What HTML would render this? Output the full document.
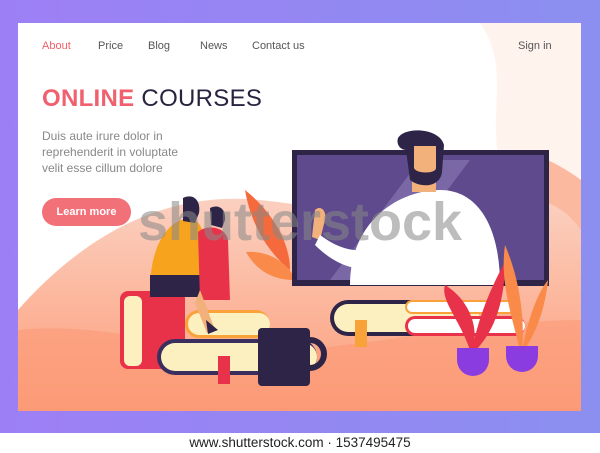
<!DOCTYPE html>
<html><head><style>
body{margin:0;width:600px;height:453px;overflow:hidden;font-family:"Liberation Sans",sans-serif;background:#fff;position:relative}
.bg{position:absolute;left:0;top:0;width:600px;height:433px;background:linear-gradient(90deg,#9d7ff5,#8b8ff0)}
.foot{position:absolute;left:0;top:433px;width:600px;height:20px;background:#fff;text-align:center;font-size:13.5px;color:#222;line-height:20px}
.nav{position:absolute;top:40px;font-size:11px;color:#555}
</style></head><body>
<div class="bg"></div>
<svg style="position:absolute;left:0;top:0" width="600" height="433">
<defs>
<linearGradient id="g2" x1="0" y1="0" x2="0" y2="1"><stop offset="0" stop-color="#fbd0c0"/><stop offset="1" stop-color="#fc9c78"/></linearGradient>
</defs>
<rect x="18" y="23" width="563" height="388" fill="#fff"/>
<path d="M480 23 C520 80 470 140 520 200 C560 240 581 230 581 230 V23Z" fill="#fff3ee"/>
<path d="M581 180 C540 150 500 140 480 170 V411 H581Z" fill="#fbb9a0"/>
<path d="M18 411 V310 C80 240 160 190 260 200 C360 210 420 240 480 210 C530 190 560 200 581 230 V411Z" fill="url(#g2)"/>
<path d="M18 411 V330 C120 320 200 360 300 350 C400 340 500 320 581 320 V411Z" fill="#fc9a76" opacity=".6"/>
<path d="M245 190 C270 210 290 240 290 270 C265 250 250 220 245 190Z" fill="#f56a3c"/>
<path d="M246 252 C270 250 290 265 295 280 C270 280 255 268 246 252Z" fill="#f98a4a"/>
<rect x="292" y="150" width="257" height="136" fill="#2e2447"/>
<rect x="297" y="155" width="247" height="125" fill="#5e4a8c"/>
<path d="M330 280 L420 160 L470 160 L380 280Z" fill="#8e7cb8" opacity=".6"/>
<path d="M350 285 C350 220 400 190 440 190 C480 190 500 230 500 285Z" fill="#fff"/>
<path d="M412 150 h24 v42 h-24z" fill="#f2b07a"/>
<path d="M398 138 C405 126 440 128 444 145 L442 172 C440 188 420 188 410 180 L406 150 C400 150 396 144 398 138Z" fill="#2e2447"/>
<path d="M414 146 h22 v22 c0 6 -20 6 -22 0z" fill="#f2b07a"/>
<path d="M315 210 c5 -5 12 0 10 10 l-5 20 l-8 -3z" fill="#f2b07a"/>
<path d="M320 235 C340 250 360 255 380 245 L385 265 C360 275 335 265 315 245Z" fill="#fff"/>
<rect x="330" y="300" width="150" height="36" rx="18" fill="#2e2447"/>
<rect x="334" y="304" width="146" height="28" rx="14" fill="#fdf0c0"/>
<rect x="405" y="300" width="110" height="14" rx="7" fill="#f9a23a"/>
<rect x="407" y="302" width="108" height="10" rx="5" fill="#fff"/>
<rect x="405" y="316" width="120" height="20" rx="10" fill="#e8324a"/>
<rect x="408" y="319" width="117" height="14" rx="7" fill="#fff"/>
<rect x="355" y="320" width="12" height="27" fill="#f9a23a"/>
<rect x="120" y="291" width="65" height="78" rx="8" fill="#e8324a"/>
<rect x="124" y="296" width="18" height="70" rx="6" fill="#fdf0c0"/>
<rect x="185" y="310" width="85" height="28" rx="14" fill="#f9a23a"/>
<rect x="188" y="313" width="82" height="22" rx="11" fill="#fdf0c0"/>
<rect x="157" y="339" width="160" height="36" rx="18" fill="#3a2e5e"/>
<rect x="161" y="343" width="156" height="28" rx="14" fill="#fdf0c0"/>
<rect x="218" y="356" width="12" height="28" fill="#e8324a"/>
<path d="M150 290 C150 250 165 220 190 218 C205 220 210 250 205 290Z" fill="#f7a31e"/>
<path d="M150 275 h60 v22 h-60z" fill="#2e2447"/>
<path d="M198 232 C205 225 225 225 228 240 L230 300 L200 300Z" fill="#e8324a"/>
<path d="M183 198 c10 -5 18 2 16 15 l-4 10 l-12 -2z" fill="#2e2447"/>
<path d="M210 208 c8 -4 16 0 15 12 l-3 8 l-11 -3z" fill="#2e2447"/>
<path d="M200 290 l15 40 l-8 3 l-12 -30z" fill="#f2b07a"/>
<path d="M206 320 l12 10 l-10 4z" fill="#2e2447"/>
<rect x="258" y="328" width="52" height="58" rx="4" fill="#2e2447"/>
<path d="M310 340 a14 14 0 0 1 0 28" stroke="#2e2447" stroke-width="6" fill="none"/>
<path d="M470 350 C460 320 440 300 445 285 C470 300 480 330 472 350Z" fill="#e8324a"/>
<path d="M472 350 C480 310 495 280 505 262 C505 300 495 330 476 350Z" fill="#e8324a"/>
<path d="M520 350 C510 310 500 280 505 245 C520 280 525 320 522 350Z" fill="#f98a4a"/>
<path d="M522 350 C530 310 540 290 548 280 C545 310 535 335 524 350Z" fill="#f98a4a"/>
<path d="M457 348 h32 v12 a16 16 0 0 1 -32 0z" fill="#8a3ce0"/>
<path d="M506 346 h32 v10 a16 16 0 0 1 -32 0z" fill="#8a3ce0"/>
<text x="300" y="240" text-anchor="middle" font-family="Liberation Sans" font-weight="bold" font-size="54" fill="#888" opacity=".55">shutterstock</text>
</svg>
<div class="nav" style="left:42px;color:#f0606a">About</div>
<div class="nav" style="left:98px">Price</div>
<div class="nav" style="left:148px">Blog</div>
<div class="nav" style="left:200px">News</div>
<div class="nav" style="left:252px">Contact us</div>
<div class="nav" style="left:518px">Sign in</div>
<div style="position:absolute;left:42px;top:85px;font-size:24px;color:#2a2340;letter-spacing:.3px"><b style="color:#f0606e">ONLINE</b> COURSES</div>
<div style="position:absolute;left:42px;top:128px;font-size:12px;line-height:16px;color:#888">Duis aute irure dolor in<br>reprehenderit in voluptate<br>velit esse cillum dolore</div>
<div style="position:absolute;left:42px;top:198px;width:89px;height:28px;border-radius:14px;background:#f27078;color:#fff;font-size:11px;font-weight:bold;text-align:center;line-height:28px">Learn more</div>
<div class="foot">www.shutterstock.com · 1537495475</div>
</body></html>
